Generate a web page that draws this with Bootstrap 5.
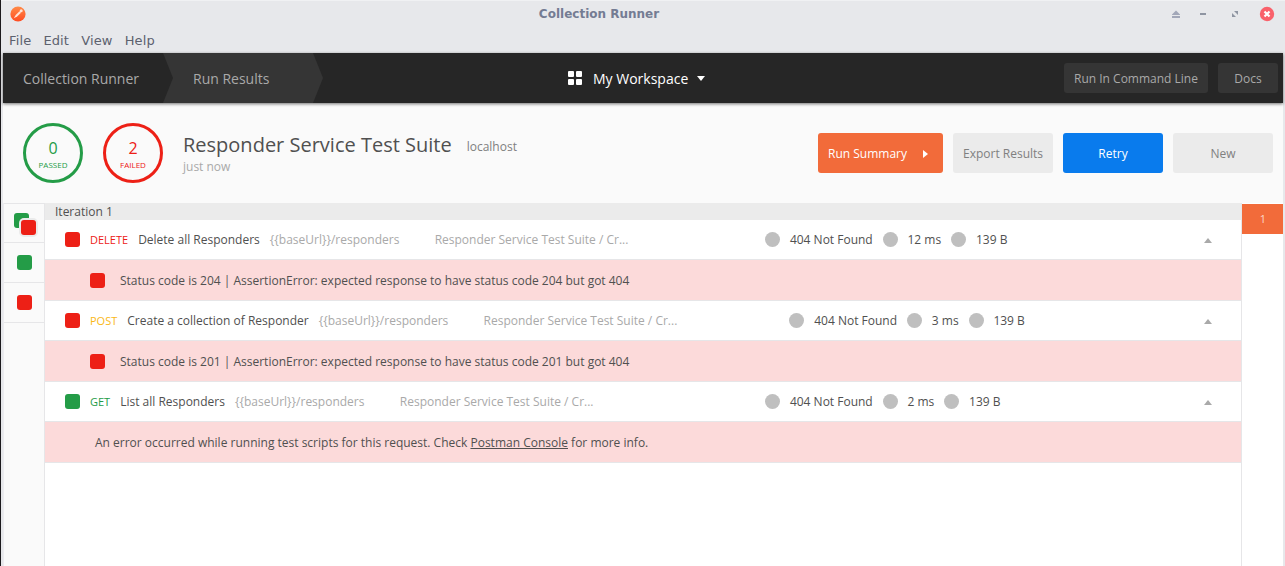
<!DOCTYPE html>
<html lang="en">
<head>
<meta charset="utf-8">
<title>Collection Runner</title>
<link rel="stylesheet" href="https://cdn.jsdelivr.net/npm/bootstrap@5.3.0/dist/css/bootstrap.min.css">
<style>
  body { font: 12px/18px "Open Sans", "Noto Sans", sans-serif; color: #505050; background: #e7e8eb; }
  .window { height: 566px; border-left: 1px solid #1c1a1d; padding: 0 2px; box-shadow: inset 0 1px #f0f1f3; }
  .titlebar { height: 27px; padding: 0 7px 0 7px; font: bold 12px/27px "DejaVu Sans", sans-serif; color: #747c93; }
  .caption { padding: 1px 0 0 3px; }
  .winbuttons { margin-left: -3px; }
  .menubar { height: 26px; padding-left: 6px; gap: 12.1px; font: 13px/27px "DejaVu Sans", sans-serif; letter-spacing: .13px; color: #5c616e; }
  .topnav { height: 50px; background: #262626; color: #a9a9a9; font-size: 14px; box-shadow: 0 1px 3px rgba(0,0,0,.55); position: relative; z-index: 1; }
  .crumb { height: 50px; line-height: 51px; }
  .crumb-first { width: 160px; padding-left: 20px; }
  .crumb-active { width: 160px; padding-left: 30px; background: #353535; clip-path: polygon(0 0, 150px 0, 100% 50%, 150px 100%, 0 100%, 10px 50%); }
  .workspace { color: #fff; line-height: 51px; width: 137px; margin-left: 245px; }
  .workspace-name { margin: 0 9px 0 11px; }
  .btn-dim { background: #353535; color: #a9a9a9; font-size: 12px; line-height: 30px; height: 30px; padding: 1px 0 0; border: 0; border-radius: 3px; }
  .runhead { height: 100px; background: #fafafa; padding: 0 10px 0 20px; }
  .ring { width: 60px; height: 60px; border: 3px solid; padding-top: 12px; }
  .ring b { font-weight: 400; font-size: 16px; line-height: 20px; }
  .ring i { font-style: normal; font-size: 8px; line-height: 14px; }
  .c-green { color: #249c47; } .c-red { color: #ed2016; } .c-yellow { color: #fab818; }
  .suite-block { padding-top: 2px; }
  .suite { font-size: 20px; line-height: 26px; }
  .host { margin-left: 15px; color: #808080; position: relative; top: -1px; }
  .act { width: 100px; height: 40px; line-height: 40px; font-size: 12px; border: 0; border-radius: 3px; padding: 1px 0 0; color: #808080; background: #ebebeb; }
  .act-orange { width: 125px; color: #fff; background: #f26b3a; padding-right: 5px; }
  .act-blue { color: #fff; background: #097bed; }
  .rail { width: 42px; background: #fafafa; border-right: 1px solid #e6e6e8; border-left: 1px solid #ececf0; }
  .rail > div { height: 40px; border-bottom: 1px solid #e6e6e8; }
  .rail > div:first-child { border-top: 1px solid #e6e6e8; }
  .sq { width: 15px; height: 15px; border-radius: 3px; flex: none; }
  .sq-green { background: #249c47; } .sq-red { background: #ed2016; }
  .stack { width: 22px; height: 22px; margin: 2px 0 0 2px; }
  .stack .sq-red { left: 7px; top: 7px; box-shadow: 0 0 0 2px #ebebeb; }
  .iter { height: 17px; line-height: 17px; background: #ebebeb; padding-left: 10px; }
  .req { height: 40px; border-bottom: 1px solid #e6e6e8; padding: 0 29px 0 20px; white-space: nowrap; }
  .req-main { min-width: 700px; padding-right: 112px; gap: 10px; }
  .verb { font-size: 11px; }
  .pale { color: #a9a9a9; }
  .path { margin-left: 25.3px; }
  .stats { gap: 9.9px; }
  .dot { width: 15px; height: 15px; border-radius: 50%; background: #bfbfbf; }
  .tri-up { border: 4px solid transparent; border-top: 0; border-bottom: 5px solid #a9a9a9; margin-top: 2px; }
  .fail { height: 41px; background: #fcdada; border-bottom: 1px solid #e6e6e8; padding: 1px 0 0 45px; }
  .iters { width: 42px; border-left: 1px solid #e6e6e8; padding-top: 1px; }
  .iters div { height: 30px; line-height: 30px; padding-left: 1px; font-size: 11px; background: #f26b3a; color: #fcd7c8; }
  .console { color: inherit; text-decoration: underline; }
</style>
</head>
<body class="overflow-hidden">
<div class="window d-flex flex-column">
  <div class="titlebar d-flex align-items-center">
    <svg width="16" height="16" viewBox="0 0 16 16"><defs><linearGradient id="g" x2="0" y2="1"><stop stop-color="#ff8b48"/><stop offset="1" stop-color="#ff4b21"/></linearGradient></defs><circle cx="8" cy="8" r="7.6" fill="url(#g)"/><path d="M3.800 12.300 5.700 9l3.800-3.800 1.500 1.500-3.900 3.700z" fill="#ffe3d6"/><circle cx="11.2" cy="4.800" r="1.500" fill="#ffe3d6"/></svg>
    <span class="caption flex-grow-1 text-center">Collection Runner</span>
    <svg class="winbuttons flex-shrink-0" width="110" height="16" viewBox="0 0 110 16"><path d="M6 8.500 10 4.500l4 4v.500H6zM6 10h8v2H6z" fill="#a2a7b8"/><path d="M34 7h6v2h-6zM68 5h4v4zM66 7v4h4z" fill="#8f95a2"/><circle cx="101" cy="8" r="7.200" fill="#f9616b"/><path d="m98.500 5.500 5 5m0-5-5 5" stroke="#fff" stroke-width="2.200"/></svg>
  </div>
  <div class="menubar d-flex"><span>File</span><span>Edit</span><span>View</span><span>Help</span></div>
  <nav class="topnav d-flex align-items-center">
    <div class="crumb crumb-first">Collection Runner</div>
    <div class="crumb crumb-active">Run Results</div>
    <div class="workspace d-flex align-items-center">
      <svg class="flex-shrink-0" width="14" height="14" fill="#fff"><rect width="6" height="6" rx="1"/><rect x="8" width="6" height="6" rx="1"/><rect y="8" width="6" height="6" rx="1"/><rect x="8" y="8" width="6" height="6" rx="1"/></svg>
      <span class="workspace-name text-nowrap">My Workspace</span>
      <svg class="flex-shrink-0" width="8" height="5" fill="#fff"><path d="M0 0h8L4 5z"/></svg>
    </div>
    <div class="d-flex ms-auto" style="gap:10px;padding-right:5px"><button class="btn btn-dim" style="width:144px">Run In Command Line</button><button class="btn btn-dim" style="width:60px">Docs</button></div>
  </nav>
  <header class="runhead d-flex align-items-center">
    <div class="ring c-green rounded-circle d-flex flex-column align-items-center"><b>0</b><i>PASSED</i></div>
    <div class="ring c-red rounded-circle d-flex flex-column align-items-center" style="margin:0 20px"><b>2</b><i>FAILED</i></div>
    <div class="suite-block">
      <div class="d-flex align-items-baseline"><span class="suite">Responder Service Test Suite</span><span class="host">localhost</span></div>
      <div class="pale">just now</div>
    </div>
    <div class="d-flex ms-auto" style="gap:10px">
      <button class="btn act act-orange">Run Summary<svg style="margin-left:16px;vertical-align:0" width="5" height="8" fill="#fff"><path d="M0 0l5 4-5 4z"/></svg></button>
      <button class="btn act">Export Results</button><button class="btn act act-blue">Retry</button><button class="btn act">New</button>
    </div>
  </header>
  <main class="d-flex flex-grow-1 bg-white">
    <aside class="rail">
      <div class="d-flex align-items-center justify-content-center"><span class="stack position-relative"><span class="sq sq-green d-block"></span><span class="sq sq-red position-absolute"></span></span></div>
      <div class="d-flex align-items-center justify-content-center"><span class="sq sq-green"></span></div>
      <div class="d-flex align-items-center justify-content-center"><span class="sq sq-red"></span></div>
    </aside>
    <section class="flex-grow-1">
      <div class="iter">Iteration 1</div>
      <div class="req d-flex align-items-center">
        <div class="req-main d-flex align-items-center"><span class="sq sq-red"></span><span class="verb c-red">DELETE</span><span>Delete all Responders</span><span class="pale">{{baseUrl}}/responders</span><span class="pale path">Responder Service Test Suite / Cr...</span></div>
        <div class="stats d-flex align-items-center"><span class="dot"></span><span>404 Not Found</span><span class="dot"></span><span>12 ms</span><span class="dot"></span><span>139 B</span></div>
        <span class="tri-up ms-auto"></span>
      </div>
      <div class="fail d-flex align-items-center"><span class="sq sq-red"></span><span style="margin-left:15px">Status code is 204 | AssertionError: expected response to have status code 204 but got 404</span></div>
      <div class="req d-flex align-items-center">
        <div class="req-main d-flex align-items-center"><span class="sq sq-red"></span><span class="verb c-yellow">POST</span><span>Create a collection of Responder</span><span class="pale">{{baseUrl}}/responders</span><span class="pale path">Responder Service Test Suite / Cr...</span></div>
        <div class="stats d-flex align-items-center"><span class="dot"></span><span>404 Not Found</span><span class="dot"></span><span>3 ms</span><span class="dot"></span><span>139 B</span></div>
        <span class="tri-up ms-auto"></span>
      </div>
      <div class="fail d-flex align-items-center"><span class="sq sq-red"></span><span style="margin-left:15px">Status code is 201 | AssertionError: expected response to have status code 201 but got 404</span></div>
      <div class="req d-flex align-items-center">
        <div class="req-main d-flex align-items-center"><span class="sq sq-green"></span><span class="verb c-green">GET</span><span>List all Responders</span><span class="pale">{{baseUrl}}/responders</span><span class="pale path">Responder Service Test Suite / Cr...</span></div>
        <div class="stats d-flex align-items-center"><span class="dot"></span><span>404 Not Found</span><span class="dot"></span><span>2 ms</span><span class="dot"></span><span>139 B</span></div>
        <span class="tri-up ms-auto"></span>
      </div>
      <div class="fail d-flex align-items-center"><span style="margin-left:5px">An error occurred while running test scripts for this request. Check <a class="console">Postman Console</a> for more info.</span></div>
    </section>
    <aside class="iters text-center"><div>1</div></aside>
  </main>
</div>
<script src="https://cdn.jsdelivr.net/npm/bootstrap@5.3.0/dist/js/bootstrap.bundle.min.js"></script>
</body>
</html>
